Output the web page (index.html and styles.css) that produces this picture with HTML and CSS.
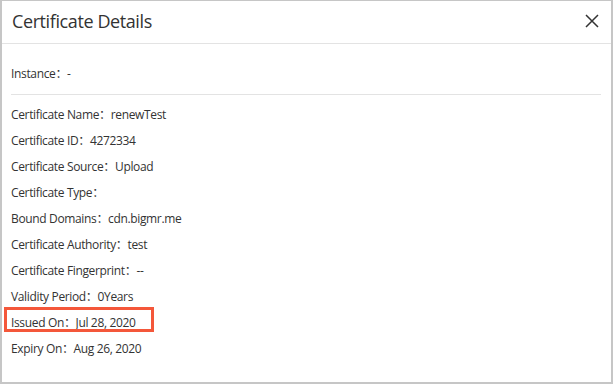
FILE: index.html
```html
<!DOCTYPE html>
<html>
<head>
<meta charset="utf-8">
<link rel="stylesheet" href="styles.css">
</head>
<body>
<div class="dialog">
  <div class="header">
    <div class="title">Certificate Details</div>
    <svg class="close" width="14" height="14" viewBox="0 0 14 14"><path d="M1 1 L13 13 M13 1 L1 13" stroke="#333" stroke-width="1.5" fill="none"/></svg>
  </div>
  <div class="body">
    <div class="row first">Instance：-</div>
    <div class="sep"></div>
    <div class="row">Certificate Name：renewTest</div>
    <div class="row">Certificate ID：4272334</div>
    <div class="row">Certificate Source：Upload</div>
    <div class="row">Certificate Type：</div>
    <div class="row">Bound Domains：cdn.bigmr.me</div>
    <div class="row">Certificate Authority：test</div>
    <div class="row">Certificate Fingerprint：--</div>
    <div class="row">Validity Period：0Years</div>
    <div class="row hl">Issued On：Jul 28, 2020</div>
    <div class="row">Expiry On：Aug 26, 2020</div>
  </div>
</div>
</body>
</html>
```
FILE: styles.css
```css
html, body { margin: 0; padding: 0; background: #fff; }
body { font-family: "Open Sans", "Noto Sans CJK SC", sans-serif; color: #333; }
.dialog {
  box-sizing: border-box;
  width: 613px;
  height: 384px;
  border-top: 1px solid #c6c6c6;
  border-left: 2px solid #c6c6c6;
  border-right: 2px solid #c6c6c6;
  border-bottom: 2px solid #c6c6c6;
}
.header {
  height: 42px;
  border-bottom: 1px solid #e3e3e3;
  display: flex;
  align-items: center;
  justify-content: space-between;
  padding: 0 12px 0 10px;
}
.title { font-size: 18px; color: #333; margin-top: -2px; letter-spacing: -0.4px; }
.close { margin-top: -2px; }
.body { padding: 17px 10px 0 9px; font-size: 12px; }
.row { height: 26px; line-height: 26px; position: relative; white-space: nowrap; letter-spacing: -0.35px; }
.sep { height: 1px; background: #e3e3e3; margin: 7px 0 7px 0; }
.hl::before {
  content: "";
  position: absolute;
  left: -7px; top: -3px;
  width: 150px; height: 25px;
  border: 3px solid #f4573a;
  box-sizing: border-box;
}
```
